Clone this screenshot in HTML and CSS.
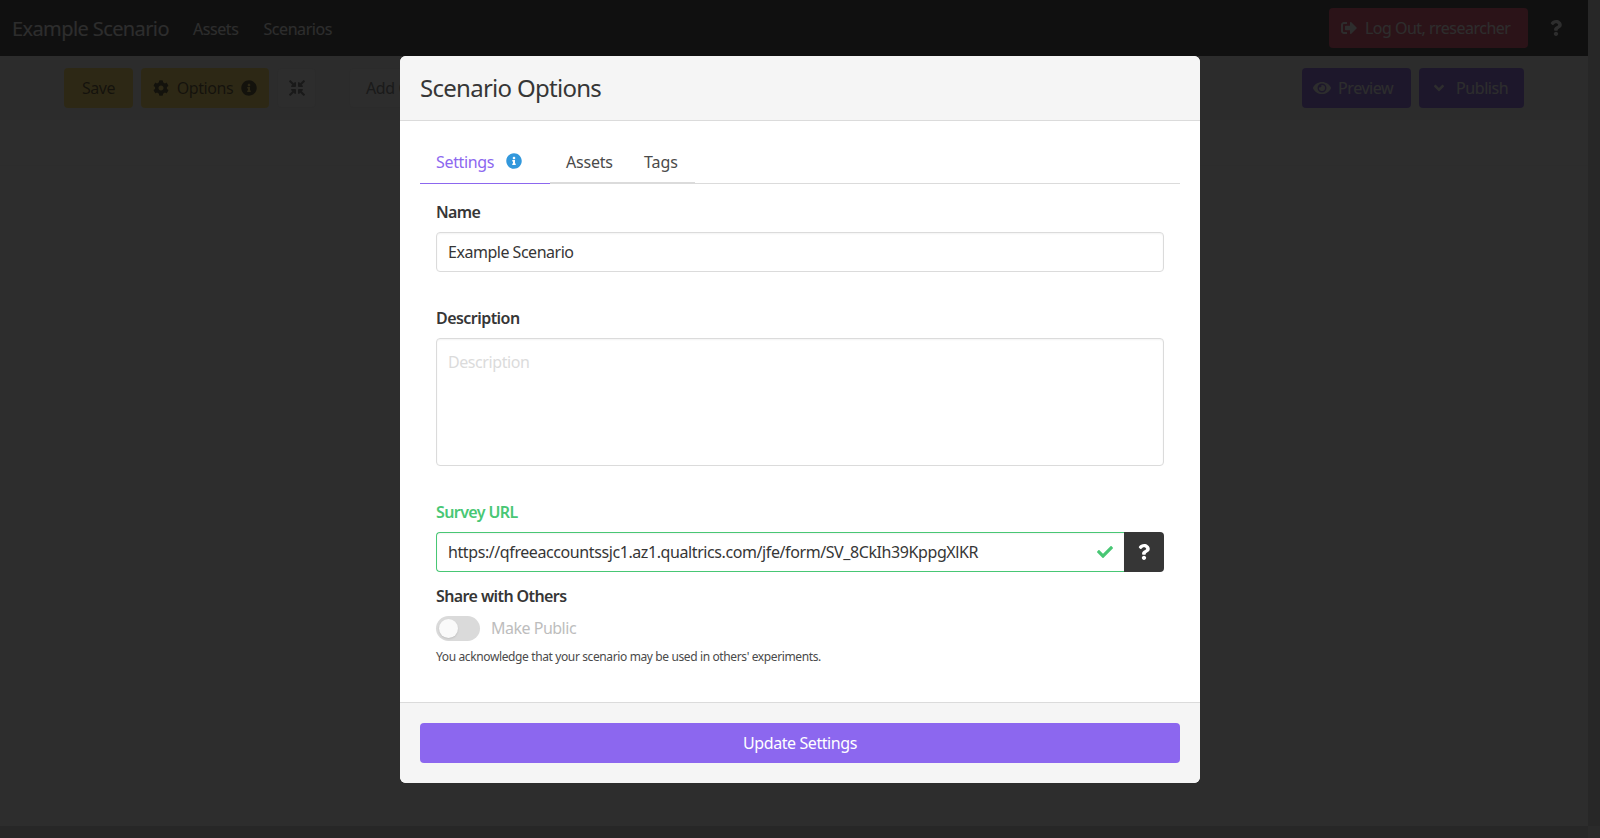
FILE: index.html
```
<!DOCTYPE html>
<html lang="en">
<head>
<meta charset="utf-8">
<title>Scenario Options</title>
<link rel="stylesheet" href="styles.css">
</head>
<body>
<svg class="sprite" width="0" height="0">
  <symbol id="cog" viewBox="0 0 512 512"><path d="M487.4 315.7l-42.600-24.600c4.300-23.200 4.300-47 0-70.200l42.600-24.600c4.900-2.800 7.100-8.600 5.500-14-11.100-35.600-30-67.800-54.700-94.600-3.800-4.100-10-5.100-14.800-2.300L380.800 110c-17.900-15.400-38.500-27.300-60.800-35.100V25.800c0-5.600-3.900-10.500-9.400-11.700-36.700-8.200-74.300-7.800-109.200 0-5.500 1.200-9.400 6.100-9.400 11.700V75c-22.200 7.900-42.800 19.800-60.800 35.100L88.700 85.500c-4.900-2.800-11-1.900-14.800 2.300-24.700 26.700-43.600 58.900-54.700 94.600-1.700 5.400.6 11.200 5.500 14L67.300 221c-4.300 23.200-4.300 47 0 70.200l-42.600 24.600c-4.900 2.800-7.100 8.600-5.500 14 11.100 35.600 30 67.800 54.700 94.600 3.800 4.100 10 5.100 14.800 2.300l42.600-24.600c17.900 15.400 38.500 27.300 60.800 35.100v49.200c0 5.600 3.900 10.500 9.400 11.700 36.700 8.200 74.300 7.800 109.200 0 5.500-1.200 9.400-6.100 9.400-11.700v-49.200c22.200-7.900 42.800-19.800 60.800-35.100l42.600 24.600c4.900 2.800 11 1.900 14.800-2.300 24.700-26.700 43.600-58.900 54.700-94.600 1.500-5.500-.7-11.300-5.600-14.100zM256 336c-44.100 0-80-35.900-80-80s35.900-80 80-80 80 35.900 80 80-35.900 80-80 80z"/></symbol>
  <symbol id="info" viewBox="0 0 512 512"><path d="M256 8C119 8 8 119.100 8 256c0 137 111 248 248 248s248-111 248-248C504 119.100 393 8 256 8zm0 110c23.200 0 42 18.800 42 42s-18.800 42-42 42-42-18.800-42-42 18.800-42 42-42zm56 254c0 6.600-5.400 12-12 12h-88c-6.600 0-12-5.400-12-12v-24c0-6.600 5.400-12 12-12h12v-64h-12c-6.600 0-12-5.400-12-12v-24c0-6.600 5.400-12 12-12h64c6.600 0 12 5.400 12 12v100h12c6.600 0 12 5.400 12 12v24z"/></symbol>
  <symbol id="eye" viewBox="0 0 576 512"><path d="M572.500 241.400C518.300 135.600 410.900 64 288 64S57.700 135.600 3.500 241.400a32.400 32.400 0 0 0 0 29.200C57.700 376.400 165.100 448 288 448s230.300-71.600 284.500-177.400a32.400 32.400 0 0 0 0-29.200zM288 400a144 144 0 1 1 144-144 143.900 143.900 0 0 1-144 144zm0-240a95.300 95.300 0 0 0-25.300 3.800 47.900 47.900 0 0 1-66.900 66.900A95.800 95.800 0 1 0 288 160z"/></symbol>
  <symbol id="down" viewBox="0 0 320 512"><path d="M143 352.300L7 216.300c-9.400-9.400-9.400-24.600 0-33.900l22.600-22.600c9.400-9.400 24.600-9.400 33.900 0l96.400 96.400 96.400-96.400c9.400-9.400 24.600-9.400 33.900 0l22.600 22.600c9.400 9.400 9.400 24.600 0 33.900l-136 136c-9.200 9.400-24.400 9.400-33.800 0z"/></symbol>
  <symbol id="out" viewBox="0 0 512 512"><path d="M497 273L329 441c-15 15-41 4.500-41-17v-96H152c-13.300 0-24-10.700-24-24v-96c0-13.300 10.700-24 24-24h136V88c0-21.400 25.900-32 41-17l168 168c9.300 9.400 9.300 24.600 0 34zM192 436v-40c0-6.600-5.400-12-12-12H96c-17.700 0-32-14.300-32-32V160c0-17.700 14.300-32 32-32h84c6.600 0 12-5.400 12-12V76c0-6.600-5.400-12-12-12H96c-53 0-96 43-96 96v192c0 53 43 96 96 96h84c6.600 0 12-5.400 12-12z"/></symbol>
  <symbol id="question" viewBox="0 0 384 512"><path d="M202 0C122.500 0 69.700 32.500 28.700 90.500c-7.400 10.500-5.100 25 5.200 32.800l43.100 32.700c10.300 7.800 25 6 33.100-4.100 25-31.400 43.600-49.400 82.700-49.400 30.700 0 68.700 19.800 68.700 49.600 0 22.500-18.600 34.100-48.900 51.100-35.400 19.800-82.200 44.500-82.200 106.300V320c0 13.300 10.700 24 24 24h72.500c13.300 0 24-10.700 24-24v-5.800c0-42.800 125.200-44.600 125.200-160.600C376.200 66.300 285.600 0 202 0zM192 373.500c-38.200 0-69.300 31.100-69.300 69.300S153.800 512 192 512s69.300-31.100 69.300-69.300-31.100-69.200-69.300-69.200z"/></symbol>
  <symbol id="check" viewBox="0 0 512 512"><path d="M173.900 439.400L7.500 273c-10-10-10-26.200 0-36.200l36.200-36.200c10-10 26.200-10 36.200 0L192 312.700 432.100 72.600c10-10 26.200-10 36.200 0l36.200 36.200c10 10 10 26.200 0 36.200L210.100 439.400c-10 10-26.200 10-36.200 0z"/></symbol>
  <symbol id="compress" viewBox="0 0 512 512"><path d="M200 288H88c-21.400 0-32.100 25.800-17 41l32.900 31-99.200 99.300c-6.200 6.200-6.200 16.400 0 22.600l25.400 25.400c6.200 6.200 16.400 6.200 22.600 0L152 408l31.100 33c15.100 15.100 40.900 4.400 40.900-17V312c0-13.300-10.700-24-24-24zm112-64h112c21.400 0 32.100-25.900 17-41l-33-31 99.300-99.300c6.200-6.200 6.200-16.400 0-22.600L481.900 4.700c-6.200-6.200-16.400-6.200-22.600 0L360 104l-31.100-33C313.800 55.900 288 66.600 288 88v112c0 13.300 10.700 24 24 24zm96 136l33-31.100c15.100-15.100 4.400-40.900-17-40.900H312c-13.300 0-24 10.700-24 24v112c0 21.400 25.900 32.100 41 17l31-32.900 99.300 99.300c6.200 6.200 16.400 6.200 22.600 0l25.400-25.400c6.200-6.200 6.200-16.400 0-22.600L408 360zM183 71.100L152 104 52.700 4.700c-6.200-6.200-16.400-6.200-22.600 0L4.700 30.100c-6.200 6.200-6.200 16.400 0 22.600L104 152l-33 31.100C55.900 198.200 66.600 224 88 224h112c13.300 0 24-10.700 24-24V88c0-21.300-25.900-32-41-16.900z"/></symbol>
</svg>
<div class="page">
  <div class="content">
    <nav class="navbar">
      <span class="brand">Example Scenario</span>
      <a class="nav-link assets-link">Assets</a>
      <a class="nav-link">Scenarios</a>
      <button class="button danger push"><svg class="icon"><use href="#out"/></svg><span>Log Out, rresearcher</span></button>
      <svg class="icon nav-help"><use href="#question"/></svg>
    </nav>
    <div class="toolbar">
      <button class="button warning save">Save</button>
      <button class="button warning options"><svg class="icon"><use href="#cog"/></svg><span>Options</span><svg class="icon"><use href="#info"/></svg></button>
      <button class="button plain compact"><svg class="icon"><use href="#compress"/></svg></button>
      <button class="button plain add">Add C</button>
      <button class="button primary preview push"><svg class="icon wide"><use href="#eye"/></svg><span>Preview</span></button>
      <button class="button primary publish"><svg class="icon"><use href="#down"/></svg><span>Publish</span></button>
    </div>
    <div class="subbar"></div>
  </div>
  <div class="scroll-v"></div>
  <div class="scroll-h"></div>
  <div class="scroll-corner"></div>
</div>
<div class="modal">
  <section class="card">
    <header class="card-head"><h1>Scenario Options</h1></header>
    <div class="card-body">
      <ul class="tabs">
        <li class="tab active"><span>Settings</span><svg class="icon"><use href="#info"/></svg></li>
        <li class="tab tab-assets">Assets</li>
        <li class="tab tab-tags">Tags</li>
      </ul>
      <form class="form">
        <label class="label">Name</label>
        <input class="input name" type="text" value="Example Scenario">
        <label class="label desc-label">Description</label>
        <textarea class="input textarea" placeholder="Description"></textarea>
        <label class="label survey-label">Survey URL</label>
        <div class="addons">
          <input class="input success" type="text" value="https://qfreeaccountssjc1.az1.qualtrics.com/jfe/form/SV_8CkIh39KppgXlKR">
          <svg class="icon check"><use href="#check"/></svg>
          <button class="help-button" type="button"><svg class="icon"><use href="#question"/></svg></button>
        </div>
        <label class="label share-label">Share with Others</label>
        <div class="switch"><span class="track"><span class="knob"></span></span><span class="switch-text">Make Public</span></div>
        <p class="help">You acknowledge that your scenario may be used in others' experiments.</p>
      </form>
    </div>
    <footer class="card-foot"><button class="button update">Update Settings</button></footer>
  </section>
</div>
</body>
</html>
```
FILE: styles.css
```
* { box-sizing: border-box; }
html, body { margin: 0; height: 100%; overflow: hidden; }
body, button, input, textarea { font-family: "Noto Sans", sans-serif; font-size: 16px; line-height: 24px; letter-spacing: -0.42px; }
.sprite { position: absolute; }
.icon { width: 16px; height: 16px; fill: currentColor; flex: none; display: block; }
.page { display: grid; grid-template-columns: 1fr 12px; grid-template-rows: 1fr 12px; height: 838px; background: #fff; }
.scroll-v, .scroll-h { background: #d2d2d2; }
.scroll-corner { background: #e8e8e8; }

.navbar { display: flex; align-items: center; height: 56px; padding: 0 24px 0 12px; background: #363636; color: #fff; }
.brand { font-size: 20px; letter-spacing: -0.6px; margin-right: 24px; padding-top: 2px; }
.nav-link { padding-top: 1px; }
.assets-link { margin-right: 25px; }
.nav-help { margin-left: 20px; }
.push { margin-left: auto; }

.button { display: flex; align-items: center; height: 40px; margin-top: 0; margin-bottom: 0; padding: 0 16px; border: 0; border-radius: 4px; white-space: nowrap; }
.danger { width: 199px; padding: 0 12px; gap: 8px; background: #f14668; color: #fff; letter-spacing: -0.52px; }
.toolbar { display: flex; align-items: center; height: 64px; padding: 0 64px; gap: 8px; background: #f5f5f5; }
.toolbar .push { margin-left: auto; }
.warning { background: #ffdd57; color: rgba(0, 0, 0, .7); }
.save { width: 69px; justify-content: center; }
.options { width: 128px; padding: 0 12px; justify-content: space-between; }
.plain { border: 1px solid #f0f0f0; background: #fafafa; color: rgba(54, 54, 54, .85); }
.compact { width: 39px; padding: 0; justify-content: center; }
.compact .icon { opacity: .8; }
.add { width: 120px; margin-left: 25px; color: #777; }
.primary { background: #8c67ef; color: #fff; }
.preview { width: 109px; padding: 0 11px; gap: 7px; }
.publish { width: 105px; padding: 0 12px; gap: 9px; }
.wide { width: 18px; }
.subbar { height: 46px; background: #fafafa; border-bottom: 1px solid #f3f3f3; }

.modal { position: absolute; inset: 0; display: flex; justify-content: center; align-items: flex-start; padding-top: 56px; background: rgba(10, 10, 10, .86); }
.card { display: flex; flex-direction: column; width: 800px; height: 727px; border-radius: 6px; overflow: hidden; background: #fff; color: #363636; }
.card-head { display: flex; align-items: center; height: 65px; padding: 0 20px; background: #f5f5f5; border-bottom: 1px solid #dbdbdb; }
h1 { margin: 0; font-size: 24px; line-height: 24px; font-weight: 400; letter-spacing: -0.72px; }
.card-body { flex: 1; padding: 20px; }
.tabs { display: flex; height: 43px; margin: 0; padding: 0; list-style: none; border-bottom: 1px solid #dbdbdb; color: #4a4a4a; }
.tab { display: flex; height: 42px; padding: 9px 16px 0; border-bottom: 1px solid #dbdbdb; }
.tab-assets { width: 78px; letter-spacing: -0.2px; }
.tab-tags { width: 67px; letter-spacing: -0.1px; }
.tab.active { height: 43px; width: 130px; border-color: #8c67ef; color: #8c67ef; letter-spacing: -0.34px; }
.tab .icon { margin: 3px 0 0 12px; color: #3298dc; }
.form { display: flex; flex-direction: column; padding: 16px 16px 0; }
.label { font-weight: 600; letter-spacing: -0.6px; margin-bottom: 8px; }
.input { width: 100%; height: 40px; padding: 7px 11px; border: 1px solid #dbdbdb; border-radius: 4px; background: #fff; color: #363636; box-shadow: inset 0 1px 2px rgba(10, 10, 10, .05); outline: 0; }
.name { letter-spacing: -0.48px; }
.desc-label { margin-top: 34px; letter-spacing: -0.55px; }
.textarea { display: block; height: 128px; padding: 11px; resize: none; }
.textarea::placeholder { color: #dbdbdb; }
.survey-label { margin-top: 34px; color: #48c774; }
.addons { display: flex; position: relative; }
.success { border-color: #48c774; border-right: 0; border-radius: 4px 0 0 4px; letter-spacing: -0.41px; }
.check { position: absolute; right: 51px; top: 12px; color: #48c774; }
.help-button { display: grid; place-items: center; flex: none; width: 40px; height: 40px; padding: 0; border: 0; border-radius: 0 4px 4px 0; background: #363636; color: #fff; }
.share-label { margin-top: 12px; }
.switch { display: flex; align-items: center; height: 25px; gap: 11px; color: #bdbdbd; letter-spacing: -0.5px; }
.switch-text { margin-top: -2px; }
.track { width: 44px; height: 25px; padding: 3px; border-radius: 13px; background: #dadada; }
.knob { display: block; width: 19px; height: 19px; border-radius: 50%; background: #fafafa; box-shadow: 0 1px 2px rgba(0, 0, 0, .12); }
.help { margin: 7px 0 0; font-size: 12px; line-height: 18px; letter-spacing: -0.38px; color: #4a4a4a; }
.card-foot { height: 81px; padding: 20px; background: #f5f5f5; border-top: 1px solid #dbdbdb; }
.update { width: 100%; justify-content: center; background: #8c67ef; color: #fff; }
```
